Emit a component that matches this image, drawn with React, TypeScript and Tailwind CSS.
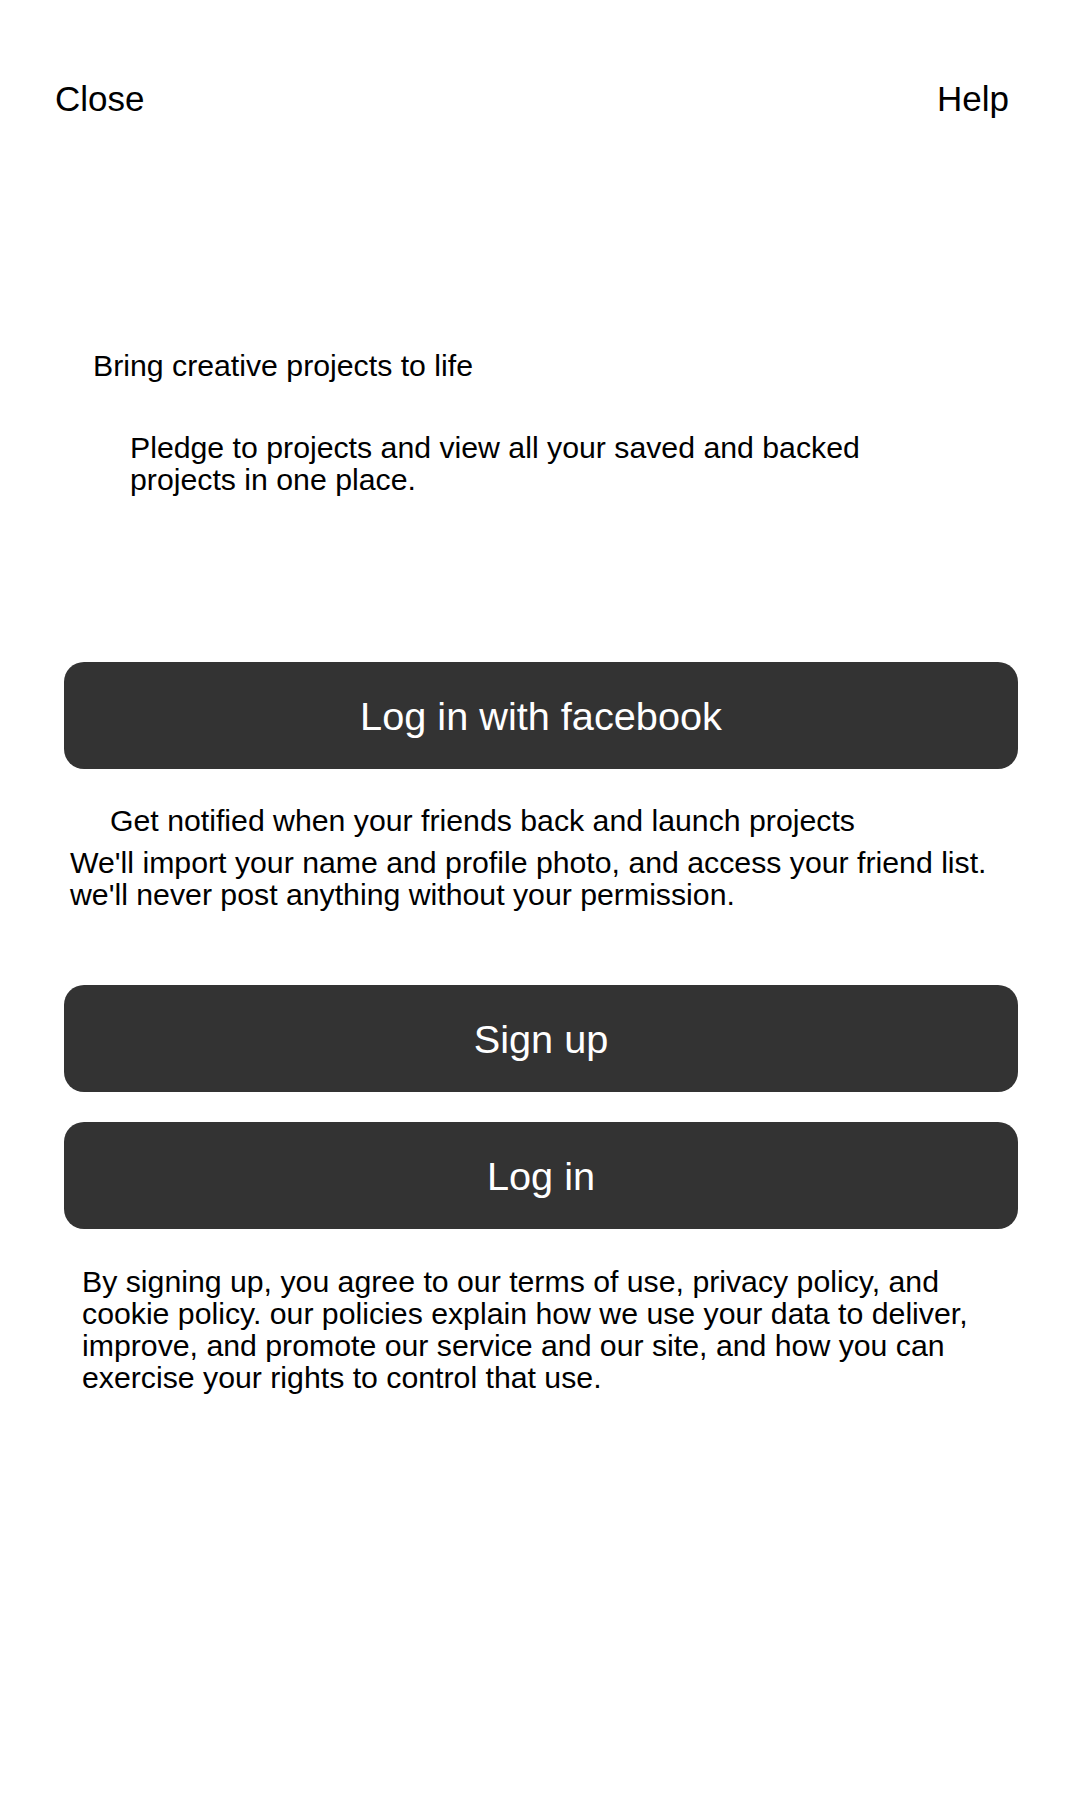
import React from "react";

function DarkButton({ label, className = "" }: { label: string; className?: string }) {
  return (
    <button
      type="button"
      className={`mx-[64px] flex h-[107px] w-[954px] items-center justify-center rounded-[20px] bg-[#333333] text-[39.7px] leading-[46px] text-white ${className}`}
    >
      {label}
    </button>
  );
}

export default function App() {
  return (
    <div
      className="min-h-[1800px] w-full bg-white text-black"
      style={{ fontFamily: '"Liberation Sans", Arial, sans-serif' }}
    >
      <header className="flex justify-between pl-[55px] pr-[71px] pt-[79px] text-[35px] leading-[40px]">
        <span>Close</span>
        <span>Help</span>
      </header>

      <p className="mt-[231px] pl-[93px] text-[30.25px] leading-[32px]">Bring creative projects to life</p>

      <p className="ml-[130px] mt-[50px] w-[780px] text-[30.25px] leading-[32px]">
        Pledge to projects and view all your saved and backed projects in one place.
      </p>

      <DarkButton label="Log in with facebook" className="mt-[166px]" />

      <p className="mt-[36px] pl-[110px] text-[30.25px] leading-[32px]">
        Get notified when your friends back and launch projects
      </p>
      <p className="ml-[70px] mt-[10px] w-[940px] text-[30.25px] leading-[32px]">
        We'll import your name and profile photo, and access your friend list. we'll never post anything
        without your permission.
      </p>

      <DarkButton label="Sign up" className="mt-[74px]" />
      <DarkButton label="Log in" className="mt-[30px]" />

      <p className="ml-[82px] mt-[37px] w-[920px] text-[30.25px] leading-[32px]">
        By signing up, you agree to our terms of use, privacy policy, and cookie policy. our policies explain how
        we use your data to deliver, improve, and promote our service and our site, and how you can exercise your
        rights to control that use.
      </p>
    </div>
  );
}
